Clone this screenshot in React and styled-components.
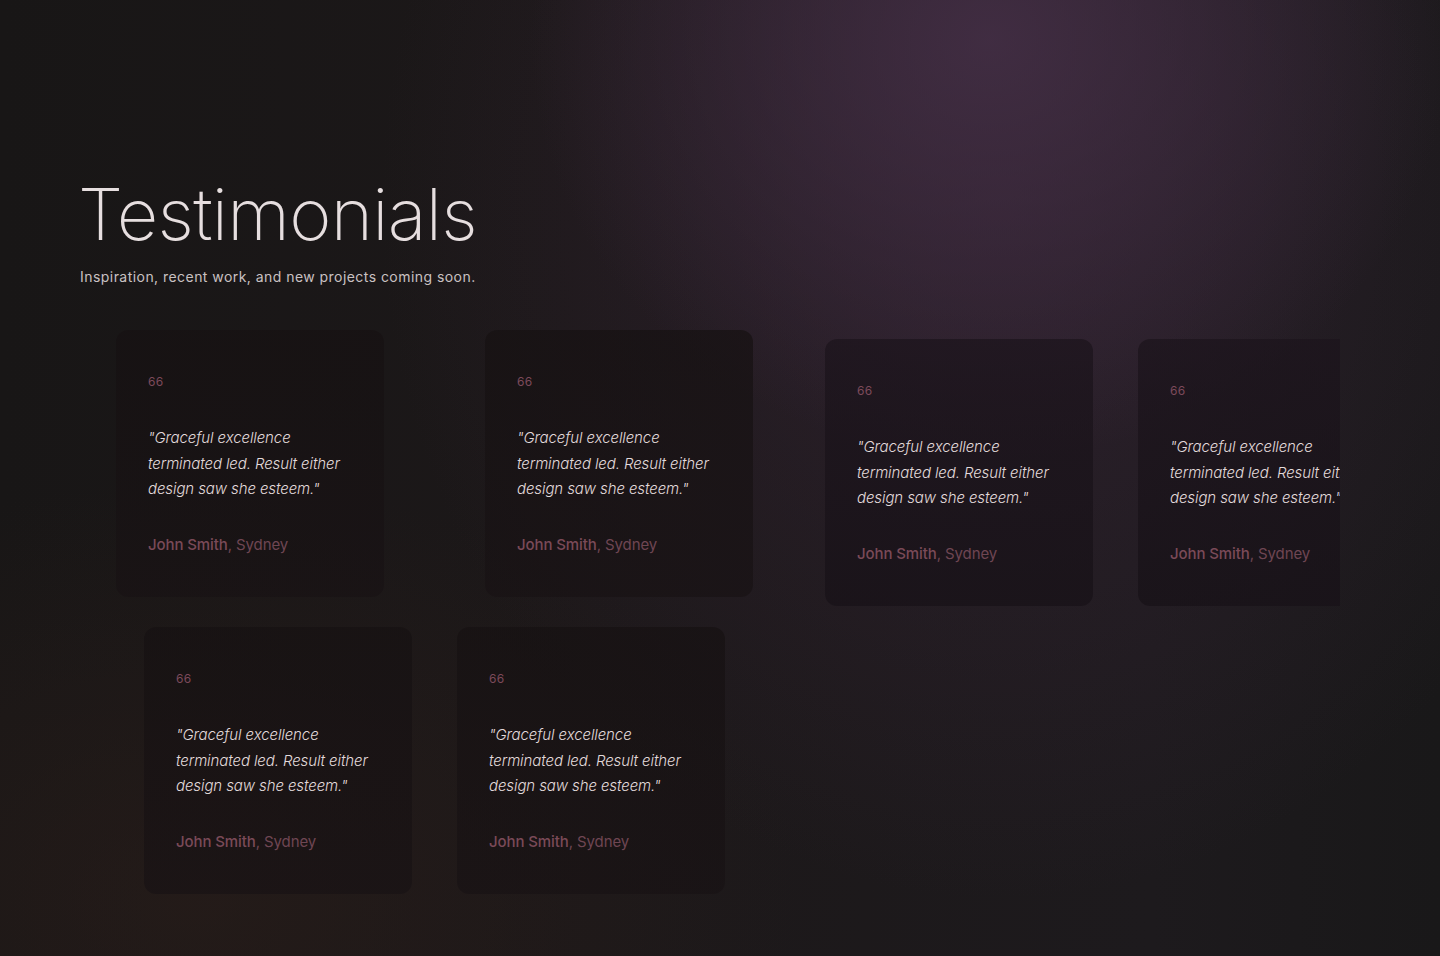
import React from "react";
import styled, { createGlobalStyle } from "styled-components";

const Global = createGlobalStyle`
  html, body { margin: 0; padding: 0; }
  body {
    background: #1b1819;
    font-family: Inter, "Noto Sans", sans-serif;
  }
`;

const Page = styled.main`
  position: relative;
  width: 1440px;
  height: 956px;
  overflow: hidden;
  box-sizing: border-box;
  padding: 178px 0 0 80px;
  background:
    radial-gradient(ellipse 460px 420px at 990px 40px, rgba(70, 48, 72, 0.8), rgba(70, 48, 72, 0) 100%),
    radial-gradient(ellipse 620px 700px at 1000px 200px, rgba(58, 38, 58, 0.55), rgba(58, 38, 58, 0) 100%),
    radial-gradient(ellipse 600px 420px at 200px 900px, rgba(44, 30, 26, 0.55), rgba(44, 30, 26, 0) 100%),
    linear-gradient(90deg, #181616 0%, #1c1819 40%, #1d1a1d 80%, #191819 100%);
`;

const Title = styled.h1`
  margin: 0 0 0 -2px;
  font-family: Inter, sans-serif;
  font-weight: 200;
  font-size: 72px;
  line-height: 72px;
  letter-spacing: -0.7px;
  color: #e6dedf;
`;

const Subtitle = styled.p`
  margin: 17px 0 0;
  font-size: 14px;
  line-height: 20px;
  letter-spacing: 0.45px;
  color: #c9c1c2;
`;

const Board = styled.section`
  width: 1260px;
  overflow: hidden;
  margin-top: 43px;
  display: flex;
  flex-direction: column;
  gap: 21px;
`;

const Row = styled.div`
  display: flex;
  align-items: flex-start;
  padding-left: ${(p) => p.$inset}px;
`;

const Card = styled.article`
  flex: 0 0 268px;
  height: 267px;
  box-sizing: border-box;
  margin-left: ${(p) => p.$gap || 0}px;
  margin-top: ${(p) => p.$drop || 0}px;
  padding: 44px 32px 0;
  border-radius: 12px;
  background: ${(p) =>
    p.$tone === "cool"
      ? "linear-gradient(180deg, rgba(28,20,28,0.75), rgba(24,18,24,0.8))"
      : "linear-gradient(180deg, rgba(22,17,18,0.72), rgba(24,18,20,0.7))"};
`;

const Mark = styled.div`
  font-size: 12px;
  line-height: 16px;
  color: #7c4a5b;
  letter-spacing: 0.3px;
`;

const Quote = styled.p`
  margin: 35px 0 0;
  font-size: 15px;
  font-weight: 300;
  font-style: italic;
  line-height: 25.5px;
  color: #e2dadb;
  letter-spacing: -0.1px;
`;

const Author = styled.p`
  margin: 33px 0 0;
  font-size: 15px;
  line-height: 20px;
  color: #6f4653;
  letter-spacing: -0.1px;
`;

const Name = styled.span`
  font-weight: 500;
  color: #7a4a58;
`;

function Testimonial(props) {
  return (
    <Card {...props}>
      <Mark>66</Mark>
      <Quote>"Graceful excellence terminated led. Result either design saw she esteem."</Quote>
      <Author>
        <Name>John Smith</Name>, Sydney
      </Author>
    </Card>
  );
}

export default function App() {
  return (
    <>
      <Global />
      <Page>
        <Title>Testimonials</Title>
        <Subtitle>Inspiration, recent work, and new projects coming soon.</Subtitle>
        <Board>
          <Row $inset={36}>
            <Testimonial />
            <Testimonial $gap={101} />
            <Testimonial $gap={72} $drop={9} $tone="cool" />
            <Testimonial $gap={45} $drop={9} $tone="cool" />
          </Row>
          <Row $inset={64}>
            <Testimonial />
            <Testimonial $gap={45} />
          </Row>
        </Board>
      </Page>
    </>
  );
}
